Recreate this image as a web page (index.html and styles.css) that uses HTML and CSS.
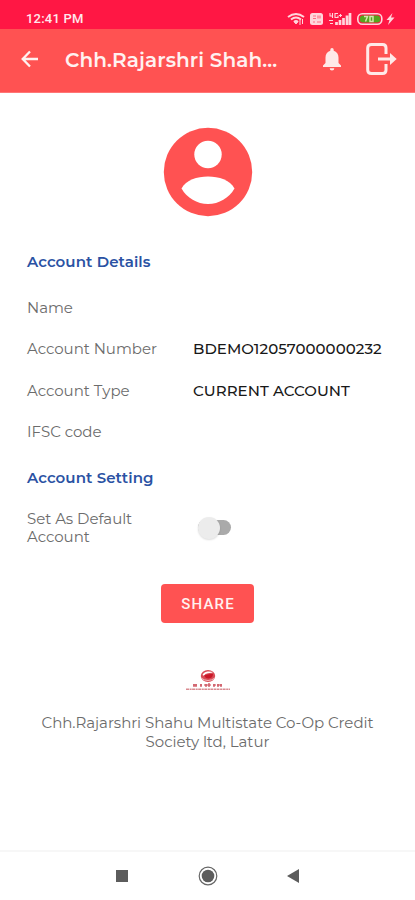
FILE: index.html
```html
<!DOCTYPE html>
<html lang="en">
<head>
<meta charset="utf-8">
<title>Account Details</title>
<link rel="stylesheet" href="styles.css">
</head>
<body>
<header>
  <div class="status">
    <span class="time">12:41 PM</span>
    <svg class="status-icons" width="110" height="14" viewBox="0 0 110 14" fill="none" stroke="#ffd5dc">
      <path d="M1 5Q9-1 17 5M4 7.500Q9 3.500 14 7.500M7 10Q9 8 11 10" stroke-width="2"/>
      <path d="M9 12l-1.500-2h3zM13 8v5M15.500 7v5" fill="#ffd5dc" stroke-width="1"/>
      <rect x="23" y="1" width="13" height="12" rx="2.500" fill="#ffd5dc" stroke="none"/>
      <path d="M26 4h3M26 6.500h3M31 3.500v3M33 3.500v3M26 10h2M30 10h4" stroke="#ff6c82" stroke-width="1.200"/>
      <path d="M43 1v3h3M45.500 1v5M51 1.500h-3v4h3v-2M52 3.500h3M53.500 2v3M42 8.500h4M43 11.500h3" stroke-width="1.100"/>
      <path d="M49.500 13v-3M53 13V8M56.500 13V6M60 13V3.500M63 13V1" stroke-width="2.700"/>
      <rect x="70.800" y="1.800" width="24" height="10.400" rx="4.500" stroke-width="1.600"/>
      <rect x="73" y="3.500" width="20" height="7" rx="2.500" fill="#56a51e" stroke="none"/>
      <path d="M77 4.500h3.500l-2 5M83 4.500h3v5h-3z" stroke="#d5e5ac" stroke-width="1.500"/>
      <path d="M105.500 1l-6 7h3l-1.500 5 6.500-7.500h-3.500z" fill="#ffd5dc" stroke="none"/>
    </svg>
  </div>
  <div class="appbar">
    <svg class="back" width="18" height="18" viewBox="0 0 18 18" fill="none" stroke="#fff1f0" stroke-width="2.300"><path d="M17 9H2M9 1.500L1.700 9 9 16.500"/></svg>
    <h1>Chh.Rajarshri Shah...</h1>
    <svg class="bell" width="18" height="23" viewBox="0 0 18 23" fill="#ffe9e8"><path d="M9 0a1.700 1.700 0 0 0-1.700 1.700v1C4.200 3.500 2.500 6.200 2.500 9.500V15L0 17.500V19h18v-1.500L15.500 15V9.500c0-3.300-1.700-6-4.800-6.800v-1A1.700 1.700 0 0 0 9 0zM6.700 20.300h4.600a2.300 2.300 0 0 1-4.600 0z"/></svg>
    <svg class="exit" width="31" height="32" viewBox="0 0 31 32" fill="none" stroke="#ffe9e8" stroke-width="3"><path d="M20 11V5q0-3.500-3.500-3.500h-11Q1.700 1.500 1.700 5v22q0 3.500 3.800 3.500h11Q20 30.500 20 27v-6"/><path d="M12 16h15"/><path d="M24 10l6.700 6-6.700 6z" fill="#ffe9e8" stroke="none"/></svg>
  </div>
</header>
<main>
  <svg class="avatar" width="90" height="90" viewBox="0 0 90 90"><circle cx="45" cy="45" r="44.200" fill="#ff5252"/><circle cx="45" cy="27.500" r="13.700" fill="#fff"/><path d="M18.500 61.500C23 53 34 49.500 45 49.500s22 3.500 26.500 12C66 71 56 77 45 77s-21-6-26.500-15.500z" fill="#fff"/></svg>
  <h2>Account Details</h2>
  <dl>
    <div class="row"><dt>Name</dt><dd></dd></div>
    <div class="row"><dt>Account Number</dt><dd>BDEMO12057000000232</dd></div>
    <div class="row"><dt>Account Type</dt><dd>CURRENT ACCOUNT</dd></div>
    <div class="row"><dt>IFSC code</dt><dd></dd></div>
  </dl>
  <h2 class="setting">Account Setting</h2>
  <div class="default">
    <p>Set As Default<br>Account</p>
    <span class="switch"><span class="knob"></span></span>
  </div>
  <button>SHARE</button>
  <svg class="logo" width="46" height="24" viewBox="0 0 46 24"><ellipse cx="23" cy="7" rx="7.200" ry="6" fill="#d84b55"/><path d="M17.500 6q1-3 5-3.500 4-.3 5.500 1l-5 .8q-3 .2-4 2.500z" fill="#fff"/><path d="M19 6.500q4-2 9-1.500 0 4-4.500 4.500-3.500-.3-4.500-3z" fill="#c91728"/><path d="M16 9q7 5 14 0" fill="none" stroke="#f5b8bc"/><path d="M8 16h4M15 16h2M19 16h7M28 16h3M32 16h5M9 15v3M11 15v3M16 15v3M21 15v3M24 14v4M29 15v3M33 15v3M36 15v3" stroke="#c94450" stroke-width="1.200"/><path d="M1 20.300h44" stroke="#d98a90" stroke-width="1.600" stroke-dasharray="3 .6 2 .5"/></svg>
  <p class="bank">Chh.Rajarshri Shahu Multistate Co-Op Credit<br>Society ltd, Latur</p>
</main>
<nav>
  <svg width="12" height="12"><rect width="12" height="12" fill="#5c5c5c"/></svg>
  <svg width="20" height="20"><circle cx="10" cy="10" r="8.800" fill="none" stroke="#666" stroke-width="1.200"/><circle cx="10" cy="10" r="6.300" fill="#5c5c5c"/></svg>
  <svg width="12" height="14"><path d="M12 0v14L0 7z" fill="#5c5c5c"/></svg>
</nav>
</body>
</html>
```
FILE: styles.css
```css
* { box-sizing: border-box; }
body { margin: 0; width: 415px; height: 900px; display: flex; flex-direction: column; background: #fff; font-family: Montserrat, Inter, sans-serif; color: #6c6c6c; overflow: hidden; }
h1, h2, p, dl, dd { margin: 0; font-weight: inherit; }
svg { display: block; flex: none; }
.status { height: 29px; background: #ff1744; display: flex; align-items: flex-start; justify-content: space-between; padding: 12px 18px 0 26px; }
.time { font: 500 13px/15px Roboto, sans-serif; color: #ffe8ec; letter-spacing: .2px; margin-top: -1px; }
.appbar { height: 64px; background: #ff5252; display: flex; align-items: center; padding: 0 18px 4px 21px; border-bottom: 1px solid #ff7676; }
h1 { font-size: 20px; font-weight: 600; color: #fff1f0; margin-left: 26px; width: 258px; white-space: nowrap; letter-spacing: .1px; padding-top: 3px; }
.bell { margin-top: 2px; }
.exit { margin-left: 25px; margin-top: 1px; }
main { flex: 1; display: flex; flex-direction: column; padding: 34px 27px 0; }
.avatar { align-self: center; }
h2 { font-size: 15px; line-height: 20px; font-weight: 600; color: #2a52a3; letter-spacing: .08px; margin-top: 35px; }
dl { margin-top: 14.500px; }
.row { display: flex; height: 41.500px; align-items: center; font-size: 15px; white-space: nowrap; }
dt { width: 166px; letter-spacing: -.03px; }
dd { font-weight: 500; color: #181818; letter-spacing: .06px; }
h2.setting { margin-top: 15px; }
.default { display: flex; align-items: center; margin-top: 22px; height: 36px; font-size: 15px; line-height: 18px; letter-spacing: -.03px; }
.default p { width: 171px; }
.switch { width: 33px; height: 15px; border-radius: 8px; background: #aaa; display: flex; align-items: center; }
.knob { width: 22px; height: 22px; border-radius: 50%; background: #ececec; box-shadow: 0 1px 2px #0002; }
button { align-self: center; width: 93px; height: 39px; margin-top: 38.500px; border: 0; border-radius: 4px; background: #ff5252; color: #fff0ef; font: 500 15px/20px Roboto, sans-serif; letter-spacing: 1.200px; padding: 1px 0 0 1px; }
.logo { align-self: center; margin-top: 46px; }
.bank { text-align: center; margin-top: 21px; font-size: 15px; line-height: 18.500px; letter-spacing: -.04px; white-space: nowrap; }
nav { height: 50.500px; border-top: 2px solid #f7f7f7; display: flex; align-items: center; justify-content: space-between; padding: 0 116px; }
```
